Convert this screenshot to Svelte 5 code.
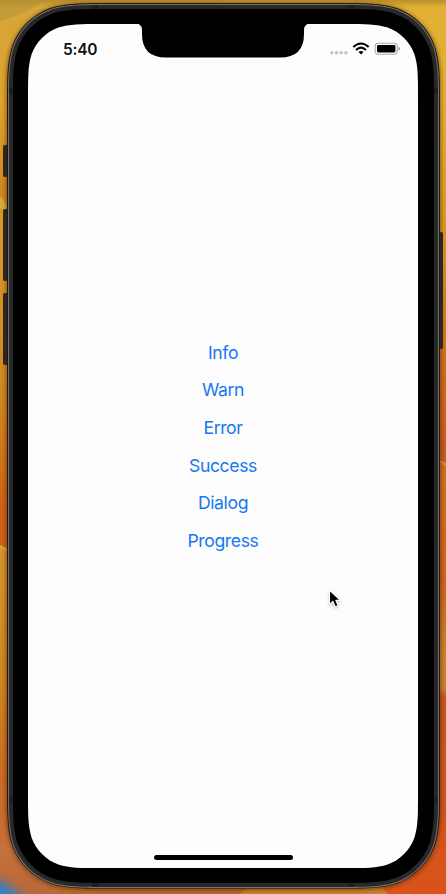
<script>
  const actions = ['Info', 'Warn', 'Error', 'Success', 'Dialog', 'Progress'];

  // Rounded rectangle with continuous-curvature corners
  function squircle(x, y, w, h, r) {
    const a = 1.528665 * r, b = 1.088493 * r, c = 0.868407 * r;
    const d = 0.631494 * r, e = 0.074911 * r, f = 0.372824 * r, g = 0.16906 * r;
    const R = x + w, B = y + h;
    return `M${x + a} ${y}H${R - a}` +
      `C${R - b} ${y} ${R - c} ${y} ${R - d} ${y + e}C${R - f} ${y + g} ${R - g} ${y + f} ${R - e} ${y + d}C${R} ${y + c} ${R} ${y + b} ${R} ${y + a}` +
      `V${B - a}C${R} ${B - b} ${R} ${B - c} ${R - e} ${B - d}C${R - g} ${B - f} ${R - f} ${B - g} ${R - d} ${B - e}C${R - c} ${B} ${R - b} ${B} ${R - a} ${B}` +
      `H${x + a}C${x + b} ${B} ${x + c} ${B} ${x + d} ${B - e}C${x + f} ${B - g} ${x + g} ${B - f} ${x + e} ${B - d}C${x} ${B - c} ${x} ${B - b} ${x} ${B - a}` +
      `V${y + a}C${x} ${y + b} ${x} ${y + c} ${x + e} ${y + d}C${x + g} ${y + f} ${x + f} ${y + g} ${x + d} ${y + e}C${x + c} ${y} ${x + b} ${y} ${x + a} ${y}Z`;
  }
</script>

<div class="desktop">
  <svg class="device" width="446" height="894" viewBox="0 0 446 894" aria-hidden="true">
    <defs>
      <linearGradient id="left" x2="0" y2="1">
        <stop offset="0" stop-color="#d5a63a" />
        <stop offset=".12" stop-color="#dfa32c" />
        <stop offset=".22" stop-color="#d0861f" />
        <stop offset=".24" stop-color="#d89a27" />
        <stop offset=".43" stop-color="#d08a20" />
        <stop offset=".53" stop-color="#d07018" />
        <stop offset=".56" stop-color="#d06216" />
        <stop offset=".612" stop-color="#cf5f16" />
        <stop offset=".613" stop-color="#d6952a" />
        <stop offset=".75" stop-color="#d0881f" />
        <stop offset=".87" stop-color="#cc6a22" />
        <stop offset=".95" stop-color="#c5713a" />
        <stop offset="1" stop-color="#b8683a" />
      </linearGradient>
      <linearGradient id="right" x2="0" y2="1">
        <stop offset="0" stop-color="#e0b034" />
        <stop offset=".12" stop-color="#e4b033" />
        <stop offset=".25" stop-color="#d99a20" />
        <stop offset=".4" stop-color="#cf701a" />
        <stop offset=".5" stop-color="#c75d1a" />
        <stop offset=".516" stop-color="#c4601d" />
        <stop offset=".517" stop-color="#d0731d" />
        <stop offset=".65" stop-color="#cd651b" />
        <stop offset=".73" stop-color="#c8852a" />
        <stop offset=".77" stop-color="#c9812a" />
        <stop offset=".78" stop-color="#c8571b" />
        <stop offset="1" stop-color="#d9531b" />
      </linearGradient>
      <linearGradient id="top" x2="0" y2="1">
        <stop offset="0" stop-color="#b88e2c" />
        <stop offset="1" stop-color="#b88e2c" stop-opacity="0" />
      </linearGradient>
      <filter id="soft" x="-20%" y="-20%" width="140%" height="140%"><feGaussianBlur stdDeviation="5" /></filter>
      <filter id="shade" x="-5%" y="-5%" width="110%" height="110%"><feGaussianBlur stdDeviation="2" /></filter>
    </defs>
    <rect width="223" height="894" fill="url(#left)" />
    <rect x="223" width="223" height="894" fill="url(#right)" />
    <path d="M0 21Q28 13 45 0H0Z" fill="#b4943e" opacity=".6" />
    <rect width="446" height="7" fill="url(#top)" />
    <path d="M0 196Q4 200 8 207V215L0 208Z" fill="#d9ac38" />
    <path d="M0 546Q5 549 8 551" fill="none" stroke="#d8b350" stroke-width="2" />
    <path d="M439 461Q443 462 446 465" fill="none" stroke="#d79b3c" stroke-width="1.5" />
    <path d="M60 886H377Q384 888 388 894H60Z" fill="#b96a2d" />
    <path d="M250 886H377Q384 888 388 894H240Z" fill="#c9822d" />
    <path d="M-12 876Q6 880 36 908H-12Z" fill="#347fc8" filter="url(#soft)" />
    <path d={squircle(6, 3, 435, 887, 69)} fill="#4d2508" opacity=".6" filter="url(#shade)" />
    <g fill="#272727" stroke="#3b2412" stroke-width="1">
      <rect x="3.5" y="145.5" width="7" height="31" rx="1" />
      <rect x="3.5" y="209.5" width="7" height="71" rx="1" />
      <rect x="3.5" y="293.5" width="7" height="71" rx="1" />
      <rect x="436.5" y="232.5" width="6" height="116" rx="1" />
    </g>
    <path d={squircle(7, 3, 433, 885.5, 68)} fill="#21150d" />
    <path d={squircle(8, 4, 431, 884, 67)} fill="#77736f" />
    <path d={squircle(9, 5, 429, 882, 66)} fill="#282828" />
    <path d="M92 5h6v4h-6zM348 5h6v4h-6zM92 883h6v4h-6zM348 883h6v4h-6zM9 88h4v6H9zM434 88h4v6h-4zM9 797h4v6H9zM434 797h4v6h-4z" fill="#1e1e1e" />
    <path d={squircle(13, 9, 421, 874, 62)} fill="#000" />
    <path d={squircle(28, 24, 390, 844, 48)} fill="#fdfdfd" />
    <path d="M136 23.5Q142 24 142 30V34Q142 57.6 166 57.6H280Q304 57.6 304 34V30Q304 24 310 23.5Z" fill="#000" />
  </svg>

  <main class="screen">
    <header class="status">
      <time>5:40</time>
      <div class="indicators">
        <svg width="72" height="16" viewBox="0 0 72 16" aria-label="Wi-Fi and battery">
          <g fill="#c4c4c4"><circle cx="3.8" cy="11.8" r="1.75" /><circle cx="8.5" cy="11.8" r="1.75" /><circle cx="13.2" cy="11.8" r="1.75" /><circle cx="17.9" cy="11.8" r="1.75" /></g>
          <g fill="none" stroke="#000" stroke-width="2.1">
            <path d="M25.3 6Q33 -1 40.7 6" />
            <path d="M28 8.9Q33 4.3 38 8.9" />
          </g>
          <path d="M33 13.5L30.5 11Q33 8.9 35.5 11Z" />
          <rect x="47.2" y="2.2" width="22" height="11" rx="3.1" fill="none" stroke="#aaa" stroke-width="1.1" />
          <rect x="49" y="4" width="18.4" height="7.5" rx="1.4" />
          <path d="M70.4 5.7Q72 6.3 72 7.7T70.4 9.7Z" fill="#999" />
        </svg>
      </div>
    </header>
    <nav class="actions">
      {#each actions as action}
        <button>{action}</button>
      {/each}
    </nav>
    <div class="home"></div>
  </main>

  <svg class="pointer" width="18" height="24" viewBox="0 0 18 24" aria-hidden="true">
    <path d="M2.5 3V17.6L5.9 14.4L8.2 19.9L11.1 18.6L8.8 13.4H13.4Z" stroke="#fff" stroke-width="1.1" stroke-linejoin="round" />
  </svg>
</div>

<style>
  .desktop {
    position: relative;
    width: 446px;
    height: 894px;
    overflow: hidden;
    box-sizing: border-box;
    padding: 24px 28px 26px;
    font-family: Inter, 'Liberation Sans', sans-serif;
  }
  .device {
    position: absolute;
    inset: 0;
  }
  .screen {
    position: relative;
    display: flex;
    flex-direction: column;
    align-items: center;
    height: 844px;
  }
  .status {
    display: flex;
    justify-content: space-between;
    box-sizing: border-box;
    width: 100%;
    height: 47px;
    padding: 15px 18px 0 35px;
  }
  time {
    padding-top: 1px;
    font-size: 15.5px;
    font-weight: 600;
    line-height: 20px;
    letter-spacing: -.25px;
    color: #111;
  }
  .indicators {
    padding-top: 1.5px;
  }
  .indicators svg {
    display: block;
  }
  .actions {
    flex: 1;
    display: flex;
    flex-direction: column;
    align-items: center;
    padding-top: 270.6px;
    gap: 15.7px;
  }
  button {
    border: 0;
    padding: 0;
    background: none;
    font: 400 17.6px/22px Inter, sans-serif;
    letter-spacing: -.38px;
    color: #1677f2;
  }
  .home {
    width: 139px;
    height: 5px;
    margin-bottom: 8px;
    border-radius: 3px;
    background: #000;
  }
  .pointer {
    position: absolute;
    left: 327px;
    top: 587px;
    filter: drop-shadow(0 1px 1px #0004);
  }
</style>
